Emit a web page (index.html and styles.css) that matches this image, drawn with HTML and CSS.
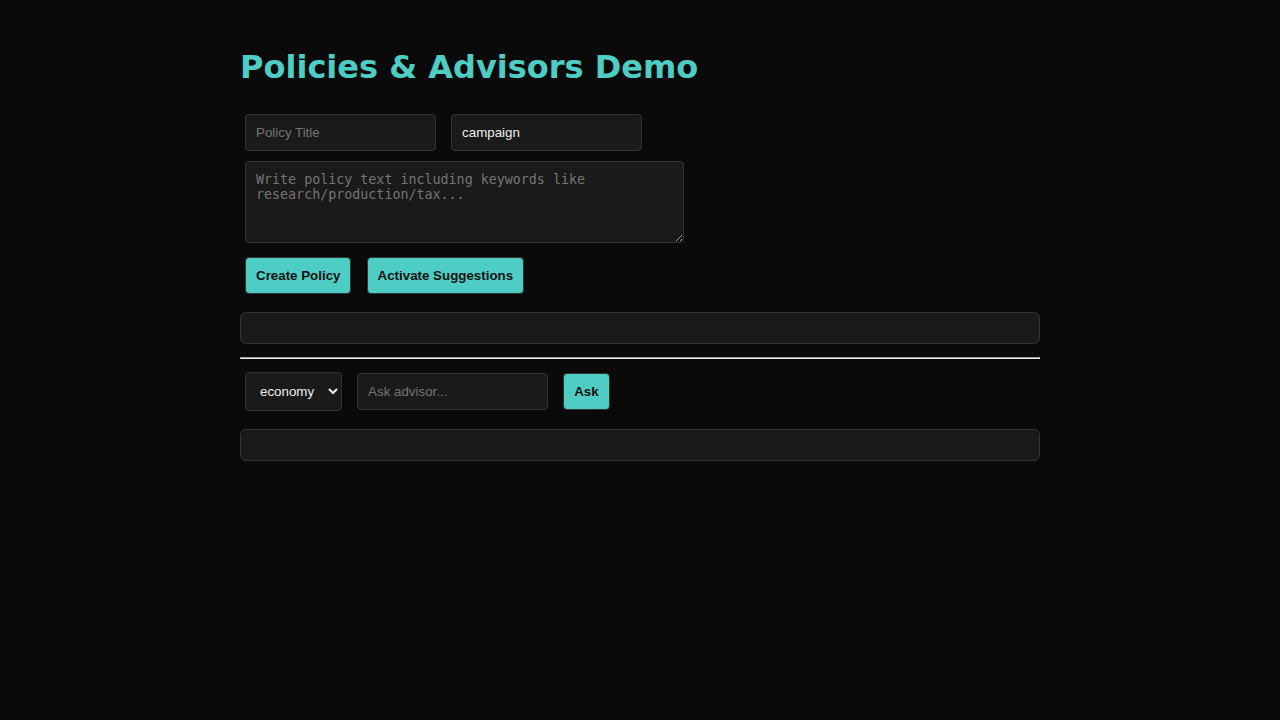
FILE: index.html
```html
<!DOCTYPE html>
<html lang="en">
<head>
<meta charset="utf-8">
<title>Policies &amp; Advisors Demo</title>
<link rel="stylesheet" href="styles.css">
</head>
<body>
<main class="app">
  <h1 class="title">Policies &amp; Advisors Demo</h1>
  <div class="row">
    <input class="field text" type="text" placeholder="Policy Title">
    <input class="field text" type="text" value="campaign">
  </div>
  <div class="row">
    <textarea class="field area" rows="4" cols="50" placeholder="Write policy text including keywords like research/production/tax..."></textarea>
  </div>
  <div class="row">
    <button class="btn">Create Policy</button>
    <button class="btn">Activate Suggestions</button>
  </div>
  <div class="output"></div>
  <hr class="divider">
  <div class="row">
    <select class="field select">
      <option>economy</option>
    </select>
    <input class="field text" type="text" placeholder="Ask advisor...">
    <button class="btn">Ask</button>
  </div>
  <div class="output"></div>
</main>
</body>
</html>
```

FILE: styles.css
```css
html, body {
  background: #0a0a0a;
}
body {
  margin: 0;
  color: #eeeeee;
  font-family: "DejaVu Sans", sans-serif;
}
.app {
  max-width: 800px;
  margin: 0 auto;
  padding: 29px 0;
}
.title {
  color: #4ecdc4;
  font-size: 32px;
  font-weight: bold;
  margin: 19px 0 23px;
}
.field {
  margin: 5px;
  padding: 10px;
  background: #1a1a1a;
  border: 1px solid #333333;
  border-radius: 4px;
  color: #eeeeee;
  font-family: "Liberation Sans", Arial, sans-serif;
  font-size: 13.333px;
}
.text {
  width: 169px;
}
.field::placeholder {
  color: #757575;
}
.area {
  font-family: "DejaVu Sans Mono", monospace;
}
.btn {
  margin: 5px;
  padding: 10px;
  background: #4ecdc4;
  color: #111111;
  border: 1px solid #333333;
  border-radius: 4px;
  font-family: "Liberation Sans", Arial, sans-serif;
  font-size: 13.333px;
  font-weight: bold;
  cursor: pointer;
}
.output {
  margin: 13px 0;
  padding: 15px;
  background: #1a1a1a;
  border: 1px solid #333333;
  border-radius: 6px;
}
.divider {
  margin: 8px 0;
}
```
